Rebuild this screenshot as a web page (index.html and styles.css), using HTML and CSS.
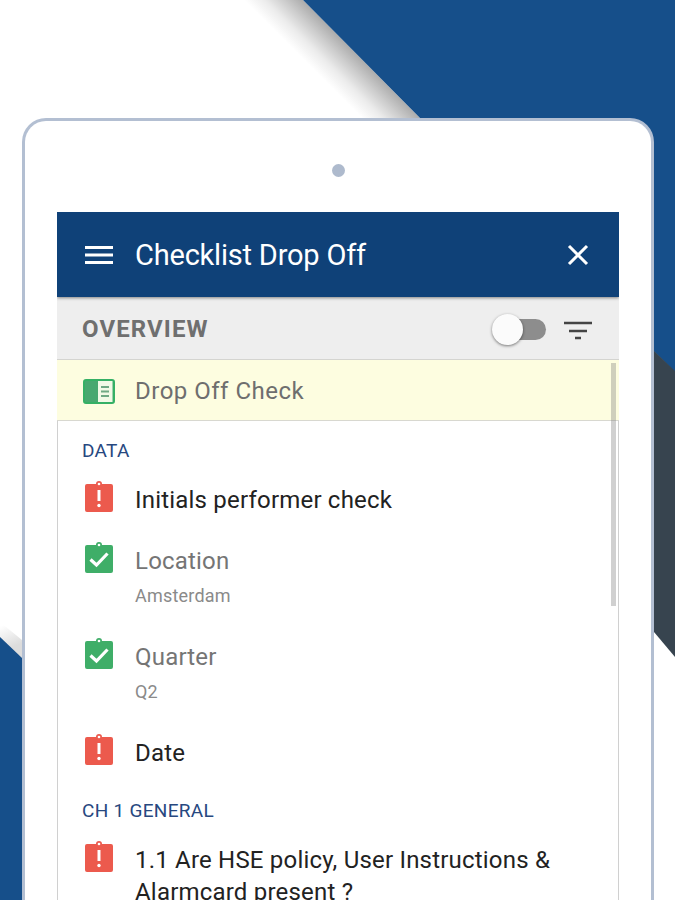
FILE: index.html
```html
<!DOCTYPE html>
<html lang="en">
<head>
<meta charset="utf-8">
<title>Checklist Drop Off</title>
<link rel="stylesheet" href="styles.css">
</head>
<body>
<svg class="backdrop" width="675" height="900" viewBox="0 0 675 900" aria-hidden="true">
  <defs>
    <linearGradient id="fold" gradientUnits="userSpaceOnUse" x1="361" y1="59" x2="332" y2="88">
      <stop offset="0" stop-color="#adadad"/>
      <stop offset="0.3" stop-color="#cbcbcb"/>
      <stop offset="0.65" stop-color="#ececec"/>
      <stop offset="1" stop-color="#ffffff"/>
    </linearGradient>
    <linearGradient id="foldLow" gradientUnits="userSpaceOnUse" x1="11" y1="648" x2="1" y2="626">
      <stop offset="0" stop-color="#dcdcdc"/>
      <stop offset="1" stop-color="#ffffff"/>
    </linearGradient>
  </defs>
  <polygon points="240,0 303,0 421,119 310,119" fill="url(#fold)"/>
  <polygon points="303,0 675,0 675,372 640,338 640,140 420,118" fill="#164f8a"/>
  <polygon points="654,351 675,371 675,657 654,632" fill="#37444f"/>
  <polygon points="0,622 22,640 22,660 0,638" fill="url(#foldLow)"/>
  <polygon points="0,637 22,658 22,900 0,900" fill="#164f8a"/>
</svg>
<main class="tablet">
  <div class="camera"></div>
  <section class="screen">
    <header class="appbar">
      <svg class="menu-icon" width="28" height="20" viewBox="0 0 28 20"><path d="M0 2.500h28M0 10h28M0 17.500h28" stroke="#fff" stroke-width="3"/></svg>
      <h1 class="title">Checklist Drop Off</h1>
      <svg class="close-icon" width="22" height="22" viewBox="0 0 22 22"><path d="M2 2l18 18M20 2L2 20" stroke="#fff" stroke-width="3"/></svg>
    </header>
    <div class="toolbar">
      <span class="overview">OVERVIEW</span>
      <span class="switch"><span class="knob"></span></span>
      <svg class="filter-icon" width="28" height="22" viewBox="0 0 28 22"><path d="M0 5h28M5 13h18M11 20h6" stroke="#444" stroke-width="2.500"/></svg>
    </div>
    <div class="current">
      <svg class="icon" width="32" height="25" viewBox="0 0 32 25"><rect x="1" y="1" width="30" height="23" rx="2" fill="#48a870" stroke="#35b065" stroke-width="2"/><rect x="15" y="2" width="14.500" height="21" fill="#f2f9e6"/><path d="M18 8h8M18 12.500h8M18 17h8" stroke="#6fa883" stroke-width="2"/></svg>
      <span class="current-label">Drop Off Check</span>
    </div>
    <div class="list">
      <span class="scrollbar"></span>
      <h2 class="group">DATA</h2>
      <div class="row">
        <svg class="icon" width="28" height="31" viewBox="0 0 28 31"><use href="#alert"/></svg>
        <div class="text">Initials performer check</div>
      </div>
      <div class="row sub">
        <svg class="icon" width="28" height="31" viewBox="0 0 28 31"><use href="#ok"/></svg>
        <div class="text done">Location<small class="value">Amsterdam</small></div>
      </div>
      <div class="row sub">
        <svg class="icon" width="28" height="31" viewBox="0 0 28 31"><use href="#ok"/></svg>
        <div class="text done">Quarter<small class="value">Q2</small></div>
      </div>
      <div class="row">
        <svg class="icon" width="28" height="31" viewBox="0 0 28 31"><use href="#alert"/></svg>
        <div class="text">Date</div>
      </div>
      <h2 class="group second">CH 1 GENERAL</h2>
      <div class="row">
        <svg class="icon" width="28" height="31" viewBox="0 0 28 31"><use href="#alert"/></svg>
        <div class="text">1.1 Are HSE policy, User Instructions &amp; Alarmcard present ?</div>
      </div>
    </div>
  </section>
</main>
<svg class="defs" width="0" height="0" aria-hidden="true">
  <defs>
    <g id="alert">
      <path d="M2 3h9a3 3 0 0 1 6 0h9a2 2 0 0 1 2 2v24a2 2 0 0 1-2 2H2a2 2 0 0 1-2-2V5a2 2 0 0 1 2-2z" fill="#ec5a4d"/>
      <circle cx="14" cy="3" r="1.300" fill="#fff"/>
      <path d="M14 9v11" stroke="#fff" stroke-width="3"/>
      <circle cx="14" cy="24.500" r="1.700" fill="#fff"/>
    </g>
    <g id="ok">
      <path d="M2 3h9a3 3 0 0 1 6 0h9a2 2 0 0 1 2 2v24a2 2 0 0 1-2 2H2a2 2 0 0 1-2-2V5a2 2 0 0 1 2-2z" fill="#3fae68"/>
      <circle cx="14" cy="3" r="1.300" fill="#fff"/>
      <path d="M5.500 17.500l6 5.500 11-11.500" fill="none" stroke="#fff" stroke-width="3.200"/>
    </g>
  </defs>
</svg>
</body>
</html>
```
FILE: styles.css
```css
html, body {
  margin: 0;
}
body {
  position: relative;
  width: 675px;
  height: 900px;
  overflow: hidden;
  background: #fff;
  font-family: Roboto, "Liberation Sans", sans-serif;
}
.backdrop {
  position: absolute;
  left: 0;
  top: 0;
}
.defs {
  position: absolute;
}
.tablet {
  position: relative;
  box-sizing: border-box;
  width: 632px;
  height: 782px;
  margin: 118px 0 0 22px;
  padding: 43px 0 0 32px;
  background: #fff;
  border: 3px solid #b3bfd2;
  border-bottom: 0;
  border-radius: 24px 24px 0 0;
}
.camera {
  width: 13px;
  height: 13px;
  margin: 0 0 35px 275px;
  border-radius: 50%;
  background: #aebacd;
}
.screen {
  width: 562px;
  height: 688px;
  overflow: hidden;
  box-shadow: inset 1px 0 #d0d0d0, inset -1px 0 #d0d0d0;
}
.appbar {
  position: relative;
  display: flex;
  align-items: center;
  height: 85px;
  padding: 0 30px 0 28px;
  background: #0f4178;
  box-shadow: 0 1px 3px rgba(0, 0, 0, .45);
}
.title {
  flex: 1;
  margin: 0 0 0 22px;
  color: #fff;
  font-size: 29px;
  font-weight: 400;
  letter-spacing: -.2px;
}
.toolbar {
  display: flex;
  align-items: center;
  height: 60px;
  padding: 2px 27px 0 25px;
  background: #eee;
  border-bottom: 1px solid #d4d4d0;
}
.overview {
  flex: 1;
  color: #6f6f6f;
  font-size: 24px;
  font-weight: 700;
  letter-spacing: 1.100px;
}
.switch {
  position: relative;
  width: 41px;
  height: 21px;
  margin-right: 18px;
  border-radius: 11px;
  background: #8d8d8d;
}
.knob {
  position: absolute;
  left: -13px;
  top: -5px;
  width: 31px;
  height: 31px;
  border-radius: 50%;
  background: #fbfbfb;
  box-shadow: 0 1px 3px rgba(0, 0, 0, .5);
}
.current {
  display: flex;
  align-items: center;
  box-sizing: border-box;
  height: 61px;
  padding: 2px 0 0 26px;
  background: #fdfde0;
  border-bottom: 1px solid #d8d8d0;
}
.current-label {
  margin-left: 20px;
  color: #6e6e6e;
  font-size: 24px;
  letter-spacing: .5px;
}
.list {
  position: relative;
  padding-left: 25px;
}
.scrollbar {
  position: absolute;
  right: 3px;
  top: -58px;
  width: 5px;
  height: 243px;
  background: rgba(120, 120, 120, .35);
}
.group {
  margin: 0;
  padding-top: 19px;
  color: #27487f;
  font-size: 19px;
  font-weight: 400;
  line-height: 21px;
  letter-spacing: .3px;
}
.group.second {
  padding-top: 25px;
}
.row {
  display: flex;
  align-items: flex-start;
  min-height: 61px;
  padding-top: 23px;
  box-sizing: border-box;
}
.row.sub {
  min-height: 96px;
}
.row .icon {
  flex: none;
  margin: -3px 22px 0 3px;
}
.text {
  width: 440px;
  color: #222;
  font-size: 24px;
  line-height: 32px;
  letter-spacing: .2px;
}
.text.done {
  color: #757575;
}
.value {
  display: block;
  margin-top: 7px;
  color: #8a8a8a;
  font-size: 18px;
  line-height: 24px;
}
```
